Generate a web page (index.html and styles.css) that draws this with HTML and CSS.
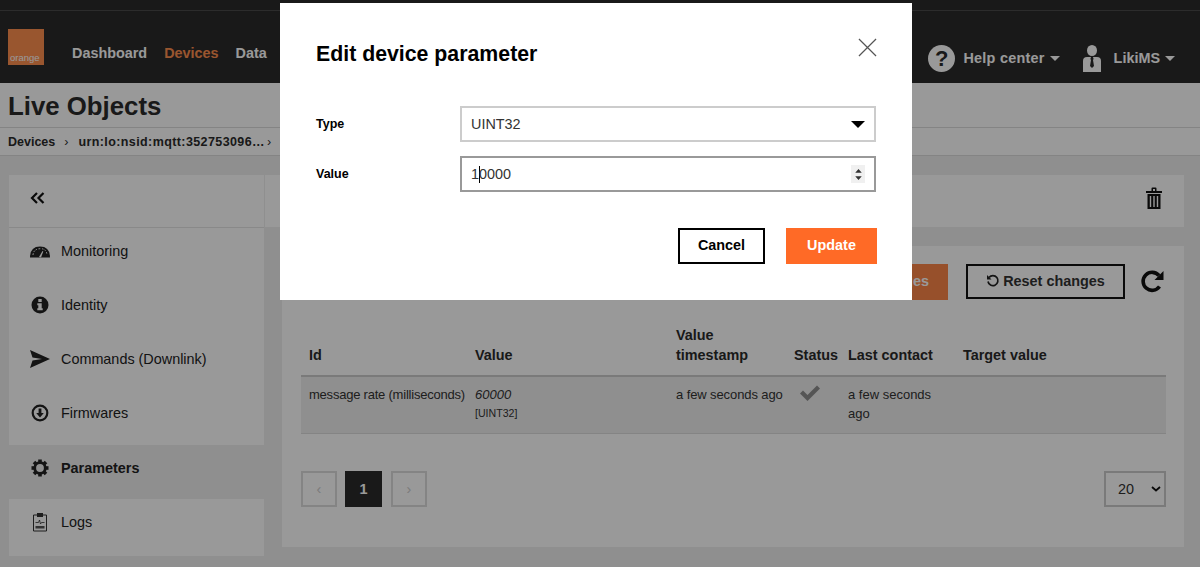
FILE: index.html
```html
<!DOCTYPE html>
<html lang="en">
<head>
  <meta charset="UTF-8">
  <title>Live Objects</title>
  <link rel="stylesheet" href="styles.css">
</head>
<body>

  <header class="topbar">
    <div class="topstrip"></div>
    <div class="topnav">
      <div class="logo"><span>orange</span></div>
      <nav class="mainmenu">
        <a>Dashboard</a>
        <a class="active">Devices</a>
        <a>Data</a>
      </nav>
      <div class="usermenu">
        <a class="help"><span class="help-icon">?</span>Help center<i class="caret"></i></a>
        <a class="user">
          <svg class="user-icon" viewBox="0 0 18 27"><ellipse cx="9" cy="5.5" rx="5" ry="5.5" fill="#fff"/><path d="M0 27V16q0-4 4-4h10q4 0 4 4v11z" fill="#fff"/><path d="M8 12h2l.6 2-.6 1 1 6-2 2-2-2 1-6-.6-1z" fill="#2b2b2b"/></svg>
          LikiMS<i class="caret"></i>
        </a>
      </div>
    </div>
  </header>

  <div class="titlebar"><h1>Live Objects</h1></div>
  <div class="breadcrumb">
    <span>Devices</span><b>›</b><span class="urn">urn:lo:nsid:mqtt:352753096…</span><b>›</b>
  </div>

  <main class="content">
    <aside class="sidebar">
      <div class="collapse">
        <svg viewBox="0 0 15 12" width="15" height="12"><path d="M7 1 2 6l5 5M13.500 1l-5 5 5 5" fill="none" stroke="#111" stroke-width="2.200"/></svg>
      </div>
      <a class="side-item">
        <svg class="side-icon" viewBox="0 0 20 20"><path d="M0 16.500q0-11 10-11t10 11z" fill="#222"/><path d="M3 14q.5-6 7-6.300T17 14" fill="none" stroke="#fff" stroke-width="1" stroke-dasharray="1.500 1.500"/><path d="M9 16l3.500-6 .8.400L11 16.500z" fill="#fff"/></svg>
        Monitoring
      </a>
      <a class="side-item">
        <svg class="side-icon" viewBox="0 0 20 20"><circle cx="10" cy="10" r="8.500" fill="#222"/><rect x="8.300" y="4" width="3.400" height="3" fill="#fff"/><path d="M7.300 8.300h4.400v5h1v2H7.300v-2h1v-3h-1z" fill="#fff"/></svg>
        Identity
      </a>
      <a class="side-item">
        <svg class="side-icon" viewBox="0 0 20 20"><path d="M0 1 20 10 0 19l2.500-7.500L12 10 2.500 8.500z" fill="#222"/></svg>
        Commands (Downlink)
      </a>
      <a class="side-item">
        <svg class="side-icon" viewBox="0 0 20 20"><circle cx="10" cy="10" r="7.300" fill="none" stroke="#222" stroke-width="2.200"/><path d="M8.600 5.500h2.800v4.500h2.400L10 14.500 6.200 10h2.400z" fill="#222"/></svg>
        Firmwares
      </a>
      <a class="side-item current">
        <svg class="side-icon" viewBox="0 0 20 20"><g fill="#222"><rect x="8.200" y="1.500" width="3.600" height="17"/><rect x="8.200" y="1.500" width="3.600" height="17" transform="rotate(45 10 10)"/><rect x="8.200" y="1.500" width="3.600" height="17" transform="rotate(90 10 10)"/><rect x="8.200" y="1.500" width="3.600" height="17" transform="rotate(135 10 10)"/></g><circle cx="10" cy="10" r="5.300" fill="#eee" stroke="#222" stroke-width="2.800"/></svg>
        Parameters
      </a>
      <a class="side-item">
        <svg class="side-icon" viewBox="0 0 20 20"><path d="M3.500 3h13v16h-13z" fill="none" stroke="#333" stroke-width="1"/><rect x="7" y="1" width="6" height="4" fill="#333"/><path d="M5.500 10.500h3l1-2.500 1 4 1-1.500h3" fill="none" stroke="#333" stroke-width=".8"/><rect x="5.500" y="14" width="9" height="2.500" fill="#555"/></svg>
        Logs
      </a>
    </aside>

    <section class="detail">
      <div class="detail-bar">
        <svg class="trash" viewBox="0 0 18 24"><path d="M1 5h16v2H1zM6.500 5V2.500q0-1 1-1h3q1 0 1 1V5h-1.500V3H8v2z" fill="#111"/><path d="M2.500 8h13v15h-13z" fill="#111"/><path d="M5.500 10v11M9 10v11M12.500 10v11" stroke="#fff" stroke-width="1.400"/></svg>
      </div>
      <div class="panel">
        <div class="actions">
          <button class="btn btn-primary">Save changes</button>
          <button class="btn btn-outline">
            <svg viewBox="0 0 14 14" width="14" height="14"><path d="M3 3.500A5 5 0 1 1 2 7.500" fill="none" stroke="#222" stroke-width="1.700"/><path d="M1 1v4.500h4.500z" fill="#222"/></svg>
            Reset changes
          </button>
          <svg class="refresh" viewBox="0 0 23 24"><path d="M18.500 17.500A9 9 0 1 1 18 6.500" fill="none" stroke="#111" stroke-width="3.600"/><path d="M22.500 2v9h-9z" fill="#111"/></svg>
        </div>

        <table class="params">
          <colgroup>
            <col class="col-id"><col class="col-value"><col class="col-time"><col class="col-status"><col class="col-contact"><col>
          </colgroup>
          <thead>
            <tr>
              <th>Id</th><th>Value</th><th>Value timestamp</th><th>Status</th><th>Last contact</th><th>Target value</th>
            </tr>
          </thead>
          <tbody>
            <tr>
              <td class="one-line tight">message rate (milliseconds)</td>
              <td><em>60000</em><small>[UINT32]</small></td>
              <td class="one-line">a few seconds ago</td>
              <td><svg class="check" viewBox="0 0 22 18"><path d="M1 9.500 4 6.500 8.500 11 18 1.500 21 4.500 8.500 17z" fill="#8e8e8e"/></svg></td>
              <td>a few seconds ago</td>
              <td></td>
            </tr>
          </tbody>
        </table>

        <div class="pager-row">
          <div class="pager">
            <a class="page-btn disabled">‹</a>
            <a class="page-btn active">1</a>
            <a class="page-btn disabled">›</a>
          </div>
          <div class="per-page">
            20
            <svg viewBox="0 0 10 6" width="10" height="6"><path d="M1 1l4 3.500L9 1" fill="none" stroke="#111" stroke-width="1.800"/></svg>
          </div>
        </div>
      </div>
    </section>
  </main>

  <div class="backdrop"></div>

  <div class="modal">
    <div class="modal-head">
      <h2>Edit device parameter</h2>
      <svg class="close" viewBox="0 0 20 20"><path d="M1 1l18 18M19 1 1 19" stroke="#555" stroke-width="1.300"/></svg>
    </div>
    <div class="form-row">
      <label>Type</label>
      <div class="field">UINT32<i class="select-arrow"></i></div>
    </div>
    <div class="form-row">
      <label>Value</label>
      <div class="field focused">
        <span>1<i class="text-caret"></i>0000</span>
        <span class="spinner">
          <svg viewBox="0 0 8 14" width="9" height="13"><path d="M4 1 7.500 5h-7zM4 13 .5 9h7z" fill="#333"/></svg>
        </span>
      </div>
    </div>
    <div class="modal-foot">
      <button class="btn btn-cancel">Cancel</button>
      <button class="btn btn-update">Update</button>
    </div>
  </div>

</body>
</html>
```

FILE: styles.css
```css
html, body {
  width: 100%;
  height: 100%;
  margin: 0;
  padding: 0;
  overflow: hidden;
}

body {
  position: relative;
  background: #eee;
  font-family: "Liberation Sans", Arial, sans-serif;
  font-size: 14.4px;
  color: #333;
}

/* header */
.topbar {
  height: 83px;
  background: #2b2b2b;
}

.topstrip {
  height: 10px;
  border-bottom: 1px solid #4a4a4a;
}

.topnav {
  display: flex;
  align-items: center;
  height: 72px;
  padding: 0 25px 0 8px;
}

.logo {
  display: flex;
  align-items: flex-end;
  width: 36px;
  height: 36px;
  background: #ff8f4f;
}

.logo span {
  padding: 0 0 2px 2px;
  font-size: 9.500px;
  line-height: 10px;
  color: #fff;
}

.mainmenu {
  display: flex;
  gap: 17px;
  margin: 12px 0 0 28px;
  font-weight: bold;
  color: #fff;
}

.mainmenu .active {
  color: #ff8f4f;
}

.usermenu {
  display: flex;
  align-items: center;
  gap: 23px;
  margin: 22px 0 0 auto;
  font-weight: bold;
  color: #fff;
}

.usermenu a {
  display: flex;
  align-items: center;
}

.help {
  letter-spacing: .25px;
}

.help-icon {
  width: 27px;
  height: 27px;
  margin-right: 8px;
  border-radius: 50%;
  background: #fff;
  color: #2b2b2b;
  font-size: 22px;
  line-height: 27px;
  text-align: center;
}

.user-icon {
  width: 18px;
  height: 27px;
  margin-right: 13px;
}

.caret {
  width: 0;
  height: 0;
  margin-left: 5px;
  border-top: 5px solid #fff;
  border-left: 5px solid transparent;
  border-right: 5px solid transparent;
}

/* title + breadcrumb */
.titlebar {
  height: 44px;
  background: #fff;
  border-bottom: 1px solid #ddd;
}

h1 {
  margin: 0;
  padding-left: 8px;
  font-size: 25.800px;
  line-height: 46px;
  color: #2b2b2b;
}

.breadcrumb {
  display: flex;
  align-items: center;
  height: 27px;
  padding-left: 8px;
  background: #fff;
  border-bottom: 1px solid #ddd;
  font-size: 12.500px;
  font-weight: bold;
  color: #2b2b2b;
}

.breadcrumb b {
  margin: 0 9px;
  font-weight: normal;
}

.breadcrumb .urn {
  margin-left: 1px;
  letter-spacing: .4px;
}

.breadcrumb .urn + b {
  margin-left: 2px;
}

/* main area */
.content {
  display: flex;
  padding: 19px 16px 0 9px;
}

.sidebar {
  flex: none;
  width: 255px;
  height: 381px;
  background: #fff;
}

.collapse {
  display: flex;
  align-items: center;
  height: 53px;
  padding: 0 0 7px 21px;
  margin-bottom: 1px;
  border-bottom: 1px solid #e4e4e4;
  box-sizing: border-box;
}

.side-item {
  display: flex;
  align-items: flex-start;
  height: 54px;
  padding: 12px 0 0 21px;
  box-sizing: border-box;
  line-height: 20px;
  color: #222;
}

.side-item.current {
  background: #eee;
  font-weight: bold;
}

.side-item.current,
.side-item.current + .side-item {
  padding-top: 13px;
}

.side-icon {
  flex: none;
  width: 20px;
  height: 20px;
  margin-right: 11px;
}

.detail {
  flex: 1;
  display: flex;
  flex-direction: column;
  min-width: 0;
}

.detail-bar {
  display: flex;
  align-items: center;
  justify-content: flex-end;
  height: 52px;
  padding: 0 21px 6px 0;
  box-sizing: border-box;
  margin-left: 1px;
  background: #fff;
}

.trash {
  width: 18px;
  height: 24px;
}

.panel {
  margin: 19px 0 0 18px;
  height: 301px;
  padding: 18px 18px 0 19px;
  box-sizing: border-box;
  background: #fff;
}

.actions {
  display: flex;
  align-items: flex-start;
  justify-content: flex-end;
  height: 36px;
}

.btn {
  height: 36px;
  padding: 0 18px;
  box-sizing: border-box;
  font-family: inherit;
  font-size: 14.4px;
  font-weight: bold;
  border-radius: 0;
  white-space: nowrap;
  cursor: pointer;
}

.btn-primary {
  margin-right: 18px;
  padding-bottom: 2px;
  border: 1px solid #fc8548;
  background: #fc8548;
  color: #fff;
}

.btn-outline {
  display: flex;
  align-items: center;
  justify-content: center;
  gap: 3px;
  width: 159px;
  height: 35px;
  padding: 0 0 1px;
  border: 2px solid #111;
  background: #fff;
  color: #333;
}

.refresh {
  width: 23px;
  height: 24px;
  margin: 5px 2px 0 16px;
}

/* table */
.params {
  width: 100%;
  margin-top: 25px;
  border-collapse: collapse;
  table-layout: fixed;
}

.col-id { width: 166px; }
.col-value { width: 201px; }
.col-time { width: 118px; }
.col-status { width: 54px; }
.col-contact { width: 115px; }

.params th {
  padding: 0 8px 10px;
  border-bottom: 2px solid #ccc;
  font-size: 14.4px;
  line-height: 20px;
  text-align: left;
  vertical-align: bottom;
  color: #2b2b2b;
}

.params td {
  height: 57px;
  padding: 8px 8px 0;
  box-sizing: border-box;
  border-bottom: 1px solid #ddd;
  background: #eee;
  font-size: 13px;
  line-height: 19px;
  vertical-align: top;
}

.params .one-line {
  letter-spacing: -.1px;
  white-space: nowrap;
}

.params .tight {
  letter-spacing: -.22px;
}

.params em,
.params small {
  display: block;
}

.params small {
  font-size: 10.600px;
}

.check {
  display: block;
  width: 22px;
  height: 18px;
  margin: -1px 0 0 5px;
}

/* paging */
.pager-row {
  display: flex;
  justify-content: space-between;
  margin-top: 37px;
}

.pager {
  display: flex;
  gap: 8px;
}

.page-btn {
  display: flex;
  align-items: center;
  justify-content: center;
  width: 36px;
  height: 36px;
  box-sizing: border-box;
  border: 2px solid #ddd;
  font-size: 14.4px;
}

.page-btn.disabled {
  color: #ccc;
}

.page-btn.active {
  width: 37px;
  margin-right: 1px;
  border-color: #2b2b2b;
  background: #2b2b2b;
  color: #fff;
  font-weight: bold;
}

.per-page {
  display: flex;
  align-items: center;
  justify-content: space-between;
  width: 62px;
  height: 36px;
  padding: 0 3px 0 12px;
  box-sizing: border-box;
  border: 2px solid #ccc;
}

/* modal over everything */
.backdrop {
  position: absolute;
  inset: 0;
  background: rgba(0, 0, 0, .4);
}

.modal {
  position: absolute;
  left: 280px;
  top: 3px;
  width: 632px;
  height: 297px;
  padding: 0 35px 0 36px;
  box-sizing: border-box;
  background: #fff;
  color: #000;
}

.modal-head {
  display: flex;
  align-items: center;
  justify-content: space-between;
  height: 103px;
  padding-bottom: 2px;
  box-sizing: border-box;
}

h2 {
  margin: 0;
  font-size: 21.300px;
  line-height: 30px;
}

.close {
  width: 19px;
  height: 19px;
  margin-bottom: 12px;
}

.form-row {
  display: flex;
  align-items: center;
  margin-bottom: 14px;
}

.form-row label {
  width: 144px;
  font-size: 12.500px;
  font-weight: bold;
}

.field {
  display: flex;
  align-items: center;
  justify-content: space-between;
  width: 416px;
  height: 36px;
  padding: 0 9px;
  box-sizing: border-box;
  border: 2px solid #ccc;
  font-size: 14.4px;
  color: #333;
}

.field.focused {
  border-color: #999;
}

.select-arrow {
  width: 0;
  height: 0;
  border-top: 7px solid #000;
  border-left: 7px solid transparent;
  border-right: 7px solid transparent;
}

.text-caret {
  display: inline-block;
  width: 1px;
  height: 17px;
  margin-right: -1px;
  background: #000;
  vertical-align: -4px;
}

.spinner {
  display: flex;
  align-items: center;
  justify-content: center;
  width: 14px;
  height: 18px;
  background: #f0f0f0;
}

.modal-foot {
  display: flex;
  justify-content: flex-end;
  gap: 21px;
  margin-top: 36px;
}

.btn-cancel {
  width: 87px;
  padding: 0 0 2px;
  border: 2px solid #000;
  background: #fff;
  color: #000;
}

.btn-update {
  width: 91px;
  padding: 0 0 2px;
  border: 1px solid #ff6a26;
  background: #ff6a26;
  color: #fff;
}
```
